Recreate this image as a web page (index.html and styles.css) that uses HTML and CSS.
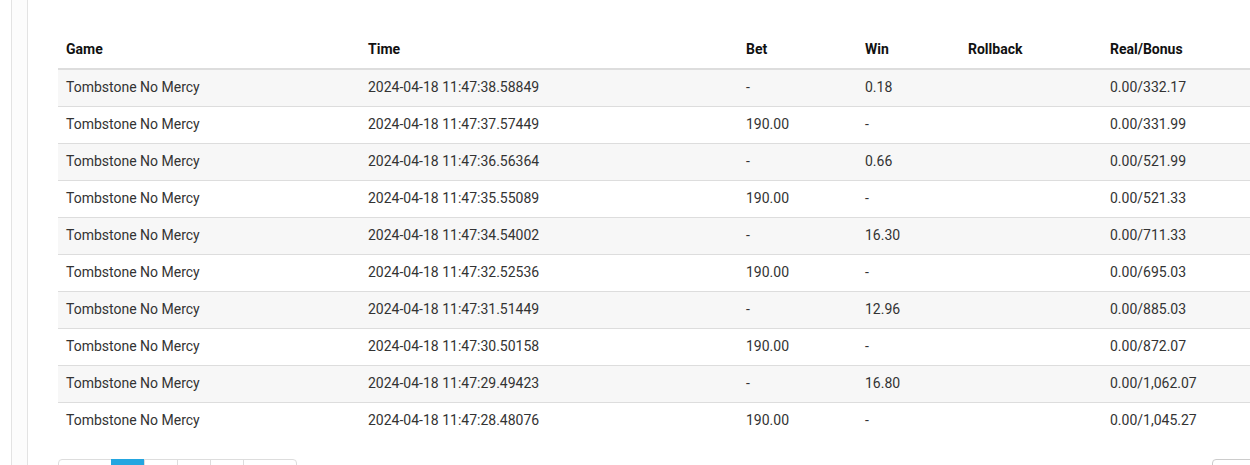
FILE: index.html
```html
<!DOCTYPE html>
<html lang="en">
<head>
    <meta charset="UTF-8">
    <title>Game History</title>
    <link rel="stylesheet" href="styles.css">
</head>
<body>
    <div class="layout">
        <div class="side-strip"></div>
        <div class="content">
            <table class="history-table">
                <thead>
                    <tr>
                        <th class="col-game">Game</th>
                        <th class="col-time">Time</th>
                        <th class="col-bet">Bet</th>
                        <th class="col-win">Win</th>
                        <th class="col-rollback">Rollback</th>
                        <th>Real/Bonus</th>
                    </tr>
                </thead>
                <tbody>
                    <tr><td>Tombstone No Mercy</td><td>2024-04-18 11:47:38.58849</td><td>-</td><td>0.18</td><td></td><td>0.00/332.17</td></tr>
                    <tr><td>Tombstone No Mercy</td><td>2024-04-18 11:47:37.57449</td><td>190.00</td><td>-</td><td></td><td>0.00/331.99</td></tr>
                    <tr><td>Tombstone No Mercy</td><td>2024-04-18 11:47:36.56364</td><td>-</td><td>0.66</td><td></td><td>0.00/521.99</td></tr>
                    <tr><td>Tombstone No Mercy</td><td>2024-04-18 11:47:35.55089</td><td>190.00</td><td>-</td><td></td><td>0.00/521.33</td></tr>
                    <tr><td>Tombstone No Mercy</td><td>2024-04-18 11:47:34.54002</td><td>-</td><td>16.30</td><td></td><td>0.00/711.33</td></tr>
                    <tr><td>Tombstone No Mercy</td><td>2024-04-18 11:47:32.52536</td><td>190.00</td><td>-</td><td></td><td>0.00/695.03</td></tr>
                    <tr><td>Tombstone No Mercy</td><td>2024-04-18 11:47:31.51449</td><td>-</td><td>12.96</td><td></td><td>0.00/885.03</td></tr>
                    <tr><td>Tombstone No Mercy</td><td>2024-04-18 11:47:30.50158</td><td>190.00</td><td>-</td><td></td><td>0.00/872.07</td></tr>
                    <tr><td>Tombstone No Mercy</td><td>2024-04-18 11:47:29.49423</td><td>-</td><td>16.80</td><td></td><td>0.00/1,062.07</td></tr>
                    <tr><td>Tombstone No Mercy</td><td>2024-04-18 11:47:28.48076</td><td>190.00</td><td>-</td><td></td><td>0.00/1,045.27</td></tr>
                </tbody>
            </table>

            <div class="table-footer">
                <ul class="pagination">
                    <li class="page-wide"><a href="#">&laquo;</a></li>
                    <li class="active"><a href="#">1</a></li>
                    <li><a href="#">2</a></li>
                    <li><a href="#">3</a></li>
                    <li><a href="#">4</a></li>
                    <li class="page-wide"><a href="#">&raquo;</a></li>
                </ul>
                <div class="page-size"><span>10</span></div>
            </div>
        </div>
    </div>
</body>
</html>
```

FILE: styles.css
```css
body {
    margin: 0;
    font-family: Roboto, "Liberation Sans", sans-serif;
    font-size: 14px;
    line-height: 1.42857;
    color: #333;
    background: #fff;
    overflow: hidden;
}

.layout {
    display: flex;
    min-height: 465px;
}

.side-strip {
    width: 15px;
    margin-left: 11px;
    border-left: 1px solid #e3e3e3;
    border-right: 1px solid #e3e3e3;
    background: #fcfcfc;
}

.content {
    flex: 1;
    padding: 32px 0 0 30px;
    min-width: 0;
}

.history-table {
    width: 1220px;
    border-collapse: collapse;
    border-spacing: 0;
}

.history-table th,
.history-table td {
    padding: 8px;
    text-align: left;
    vertical-align: top;
    white-space: nowrap;
}

.history-table th {
    font-weight: bold;
    color: #111;
    border-bottom: 2px solid #ddd;
}

.history-table td {
    border-top: 1px solid #ddd;
    color: #333;
}

.history-table tbody tr:first-child td {
    border-top: 0;
}

.history-table tbody tr:nth-child(odd) {
    background: #f7f7f7;
}

.col-game { width: 286px; }
.col-time { width: 362px; }
.col-bet { width: 103px; }
.col-win { width: 87px; }
.col-rollback { width: 126px; }

.table-footer {
    display: flex;
    justify-content: space-between;
    align-items: flex-start;
    margin-top: 20px;
}

.pagination {
    display: flex;
    list-style: none;
    margin: 0;
    padding: 0;
}

.pagination li a {
    display: block;
    width: 32px;
    height: 34px;
    border: 1px solid #ddd;
    margin-left: -1px;
    color: #337ab7;
    text-decoration: none;
    text-align: center;
    line-height: 32px;
}

.pagination li:first-child a {
    margin-left: 0;
    border-radius: 4px 0 0 4px;
}

.pagination li:last-child a {
    border-radius: 0 4px 4px 0;
}

.pagination li.page-wide a {
    width: 52px;
}

.pagination li.active a {
    background: #23a6e0;
    border-color: #23a6e0;
    color: #fff;
}

.page-size {
    width: 60px;
    height: 34px;
    border: 1px solid #ccc;
    border-radius: 4px;
    margin-right: -22px;
    padding: 6px 12px;
    box-sizing: border-box;
}
```
